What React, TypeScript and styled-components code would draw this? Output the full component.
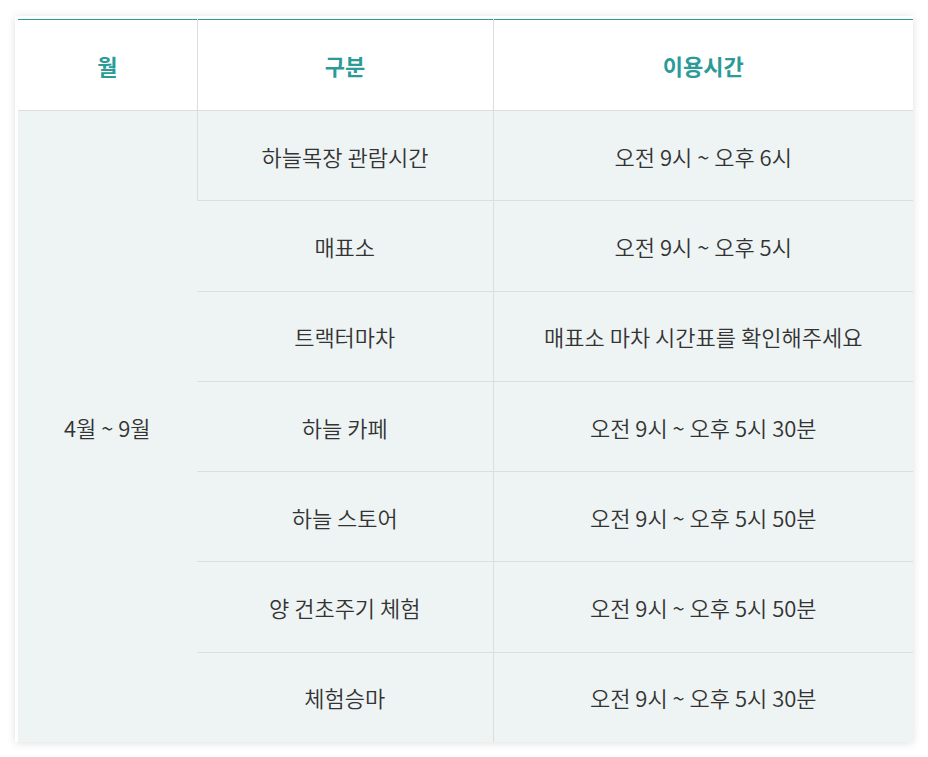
import React from 'react';
import styled, { createGlobalStyle } from 'styled-components';

const GlobalStyle = createGlobalStyle`
  html, body {
    margin: 0;
    padding: 0;
    background: #ffffff;
  }
  body {
    font-family: "Noto Sans CJK KR", "Noto Sans", sans-serif;
  }
`;

const Page = styled.div`
  padding: 16px 15px 15px 15px;
`;

const Card = styled.div`
  padding: 3px 0 0 3px;
  box-shadow: 0 1px 8px rgba(0, 0, 0, 0.13);
  background: #ffffff;
`;

const Table = styled.table`
  width: 100%;
  border-collapse: collapse;
  border-top: 1px solid #2b9b98;
  table-layout: fixed;
`;

const HeadCell = styled.th`
  height: 90px;
  padding: 0;
  font-size: 22px;
  font-weight: 700;
  color: #2b9b98;
  background: #ffffff;
  border-bottom: 1px solid #dddddd;
  border-left: 1px solid #dddddd;
  text-align: center;
  &:first-child {
    border-left: none;
  }
`;

const Cell = styled.td<{ $left?: boolean; $last?: boolean }>`
  height: 89.3px;
  padding: 0;
  font-size: 22px;
  font-weight: 350;
  color: #333333;
  background: #eef3f3;
  text-align: center;
  border-bottom: ${p => (p.$last ? 'none' : '1px solid #dddddd')};
  border-left: ${p => (p.$left ? '1px solid #dddddd' : 'none')};
`;

const MonthCell = styled(Cell)`
  border-bottom: none;
`;

const TimeCell = styled(Cell)`
  border-left: 1px solid #dddddd;
`;

const rows = [
  ['하늘목장 관람시간', '오전 9시 ~ 오후 6시'],
  ['매표소', '오전 9시 ~ 오후 5시'],
  ['트랙터마차', '매표소 마차 시간표를 확인해주세요'],
  ['하늘 카페', '오전 9시 ~ 오후 5시 30분'],
  ['하늘 스토어', '오전 9시 ~ 오후 5시 50분'],
  ['양 건초주기 체험', '오전 9시 ~ 오후 5시 50분'],
  ['체험승마', '오전 9시 ~ 오후 5시 30분'],
];

const App: React.FC = () => {
  return (
    <Page>
      <GlobalStyle />
      <Card>
        <Table>
          <colgroup>
            <col style={{ width: '179px' }} />
            <col style={{ width: '296px' }} />
            <col />
          </colgroup>
          <thead>
            <tr>
              <HeadCell>월</HeadCell>
              <HeadCell>구분</HeadCell>
              <HeadCell>이용시간</HeadCell>
            </tr>
          </thead>
          <tbody>
            {rows.map(([name, time], i) => {
              const last = i === rows.length - 1;
              return (
                <tr key={name}>
                  {i === 0 && <MonthCell rowSpan={rows.length}>4월 ~ 9월</MonthCell>}
                  <Cell $left={i === 0} $last={last}>
                    {name}
                  </Cell>
                  <TimeCell $last={last}>{time}</TimeCell>
                </tr>
              );
            })}
          </tbody>
        </Table>
      </Card>
    </Page>
  );
};

export default App;
